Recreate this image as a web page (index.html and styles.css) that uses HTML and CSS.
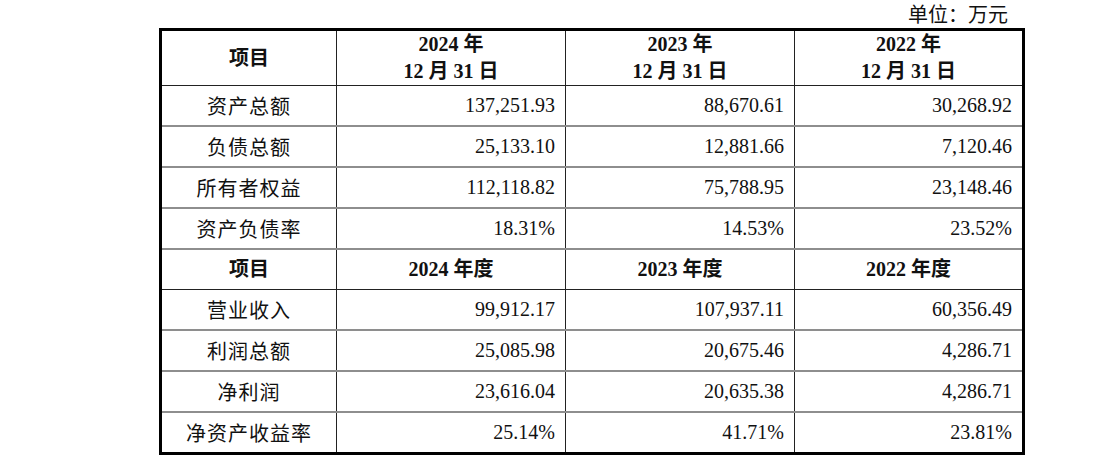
FILE: index.html
```html
<!DOCTYPE html>
<html lang="zh">
<head>
<meta charset="utf-8">
<link rel="stylesheet" href="styles.css">
</head>
<body>
<div class="wrap">
  <div class="unit">单位：万元</div>
  <table class="fin">
    <colgroup>
      <col class="c-label"><col class="c-val"><col class="c-val"><col class="c-val">
    </colgroup>
    <tr class="head">
      <th>项目</th>
      <th>2024 年<br>12 月 31 日</th>
      <th>2023 年<br>12 月 31 日</th>
      <th>2022 年<br>12 月 31 日</th>
    </tr>
    <tr><td class="lbl">资产总额</td><td>137,251.93</td><td>88,670.61</td><td>30,268.92</td></tr>
    <tr><td class="lbl">负债总额</td><td>25,133.10</td><td>12,881.66</td><td>7,120.46</td></tr>
    <tr><td class="lbl">所有者权益</td><td>112,118.82</td><td>75,788.95</td><td>23,148.46</td></tr>
    <tr><td class="lbl">资产负债率</td><td>18.31%</td><td>14.53%</td><td>23.52%</td></tr>
    <tr class="head2">
      <th>项目</th>
      <th>2024 年度</th>
      <th>2023 年度</th>
      <th>2022 年度</th>
    </tr>
    <tr><td class="lbl">营业收入</td><td>99,912.17</td><td>107,937.11</td><td>60,356.49</td></tr>
    <tr><td class="lbl">利润总额</td><td>25,085.98</td><td>20,675.46</td><td>4,286.71</td></tr>
    <tr><td class="lbl">净利润</td><td>23,616.04</td><td>20,635.38</td><td>4,286.71</td></tr>
    <tr class="last"><td class="lbl">净资产收益率</td><td>25.14%</td><td>41.71%</td><td>23.81%</td></tr>
  </table>
</div>
</body>
</html>
```
FILE: styles.css
```css
html, body {
  margin: 0;
  padding: 0;
  background: #fff;
}
body {
  font-family: "Liberation Serif", "Noto Sans CJK SC", serif;
  font-size: 20px;
  color: #111;
}
.wrap {
  width: 863px;
  margin-left: 159px;
}
.unit {
  height: 28px;
  line-height: 30px;
  text-align: right;
  padding-right: 14px;
}
.fin {
  width: 863px;
  table-layout: fixed;
  border-collapse: collapse;
  border: 3px solid #000;
}
.c-label { width: 176px; }
.c-val { width: 229px; }
.fin th, .fin td {
  border-left: 1px solid #222;
  border-right: 1px solid #222;
  border-bottom: 2px solid #8e8e8e;
  padding: 0 10px 0 0;
  height: 39px;
  text-align: right;
  font-weight: normal;
  white-space: nowrap;
}
.fin th {
  font-weight: bold;
  text-align: center;
  padding: 0;
  line-height: 27px;
  border-bottom: 1px solid #222;
}
.fin tr.head th {
  height: 53px;
}
.fin td.lbl {
  text-align: center;
  padding: 0;
  letter-spacing: 1px;
}
.fin tr.last td {
  border-bottom: 3px solid #000;
}
```
